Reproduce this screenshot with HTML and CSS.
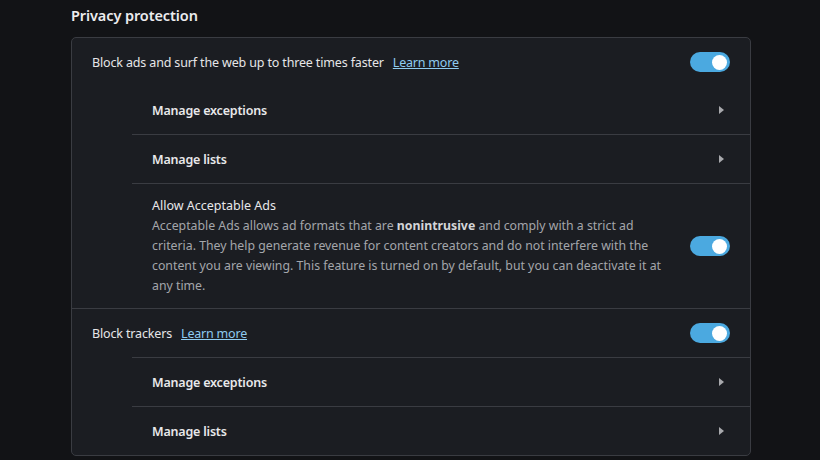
FILE: index.html
```html
<!DOCTYPE html>
<html>
<head>
<meta charset="utf-8">
<link rel="stylesheet" href="styles.css">
</head>
<body>
<div class="page">
  <h2 class="section-title">Privacy protection</h2>
  <div class="card">
    <div class="row main">
      <span class="label">Block ads and surf the web up to three times faster</span>
      <a class="link">Learn more</a>
      <span class="spacer"></span>
      <span class="toggle"><span class="knob"></span></span>
    </div>
    <div class="sub">
      <div class="row subrow first">
        <span class="sublabel">Manage exceptions</span>
        <span class="spacer"></span>
        <span class="arrow"></span>
      </div>
      <div class="row subrow">
        <span class="sublabel">Manage lists</span>
        <span class="spacer"></span>
        <span class="arrow"></span>
      </div>
      <div class="row subrow tall">
        <div class="desc">
          <div class="desc-title">Allow Acceptable Ads</div>
          <div class="desc-text">Acceptable Ads allows ad formats that are <b>nonintrusive</b> and comply with a strict ad criteria. They help generate revenue for content creators and do not interfere with the content you are viewing. This feature is turned on by default, but you can deactivate it at any time.</div>
        </div>
        <span class="spacer"></span>
        <span class="toggle"><span class="knob"></span></span>
      </div>
    </div>
    <div class="row main top-border">
      <span class="label">Block trackers</span>
      <a class="link">Learn more</a>
      <span class="spacer"></span>
      <span class="toggle"><span class="knob"></span></span>
    </div>
    <div class="sub">
      <div class="row subrow">
        <span class="sublabel">Manage exceptions</span>
        <span class="spacer"></span>
        <span class="arrow"></span>
      </div>
      <div class="row subrow">
        <span class="sublabel">Manage lists</span>
        <span class="spacer"></span>
        <span class="arrow"></span>
      </div>
    </div>
  </div>
</div>
</body>
</html>
```
FILE: styles.css
```css
html, body {
  margin: 0;
  padding: 0;
  background: #121316;
  font-family: "Noto Sans", "Open Sans", sans-serif;
  color: #e8e8ea;
  overflow: hidden;
}
.page {
  padding: 3px 70px 0 71px;
}
.section-title {
  margin: 0 0 9px 0;
  font-size: 14.5px;
  font-weight: 600;
  letter-spacing: -0.1px;
  line-height: 25px;
  color: #ececee;
}
.card {
  background: #1b1d22;
  border: 1px solid #3a3c42;
  border-radius: 5px;
  width: 678px;
}
.row {
  display: flex;
  align-items: center;
  height: 48px;
  box-sizing: border-box;
}
.main {
  padding: 0 20px 0 20px;
}
.top-border {
  border-top: 1px solid #3a3c42;
  height: 49px;
}
.label {
  font-size: 12.5px;
  letter-spacing: -0.15px;
  color: #e6e6e8;
}
.link {
  font-size: 12.5px;
  letter-spacing: -0.2px;
  color: #8fcbf0;
  text-decoration: underline;
  margin-left: 9px;
}
.spacer { flex: 1; }
.toggle {
  width: 40px;
  height: 20px;
  border-radius: 10px;
  background: #4ba9e0;
  position: relative;
  flex: none;
}
.knob {
  position: absolute;
  right: 3px;
  top: 2.5px;
  width: 15px;
  height: 15px;
  border-radius: 50%;
  background: #fff;
}
.sub {
  margin-left: 60px;
}
.subrow {
  padding: 0 20px 0 20px;
  border-top: 1px solid #3a3c42;
  height: 49px;
}
.subrow.first {
  border-top: none;
  height: 48px;
}
.sublabel {
  font-size: 12.5px;
  font-weight: 600;
  letter-spacing: -0.2px;
  color: #e8e8ea;
}
.arrow {
  width: 0;
  height: 0;
  border-top: 4px solid transparent;
  border-bottom: 4px solid transparent;
  border-left: 5px solid #a8a9ad;
  margin-right: 6px;
}
.tall {
  height: auto;
  padding-top: 12px;
  padding-bottom: 12px;
}
.desc {
  width: 512px;
  flex: none;
  line-height: 20px;
}
.desc-title {
  font-size: 12.5px;
  color: #e8e8ea;
}
.desc-text {
  font-size: 12.3px;
  color: #a4a6ab;
}
.desc-text b {
  color: #d4d5d8;
  font-weight: 700;
}
```
